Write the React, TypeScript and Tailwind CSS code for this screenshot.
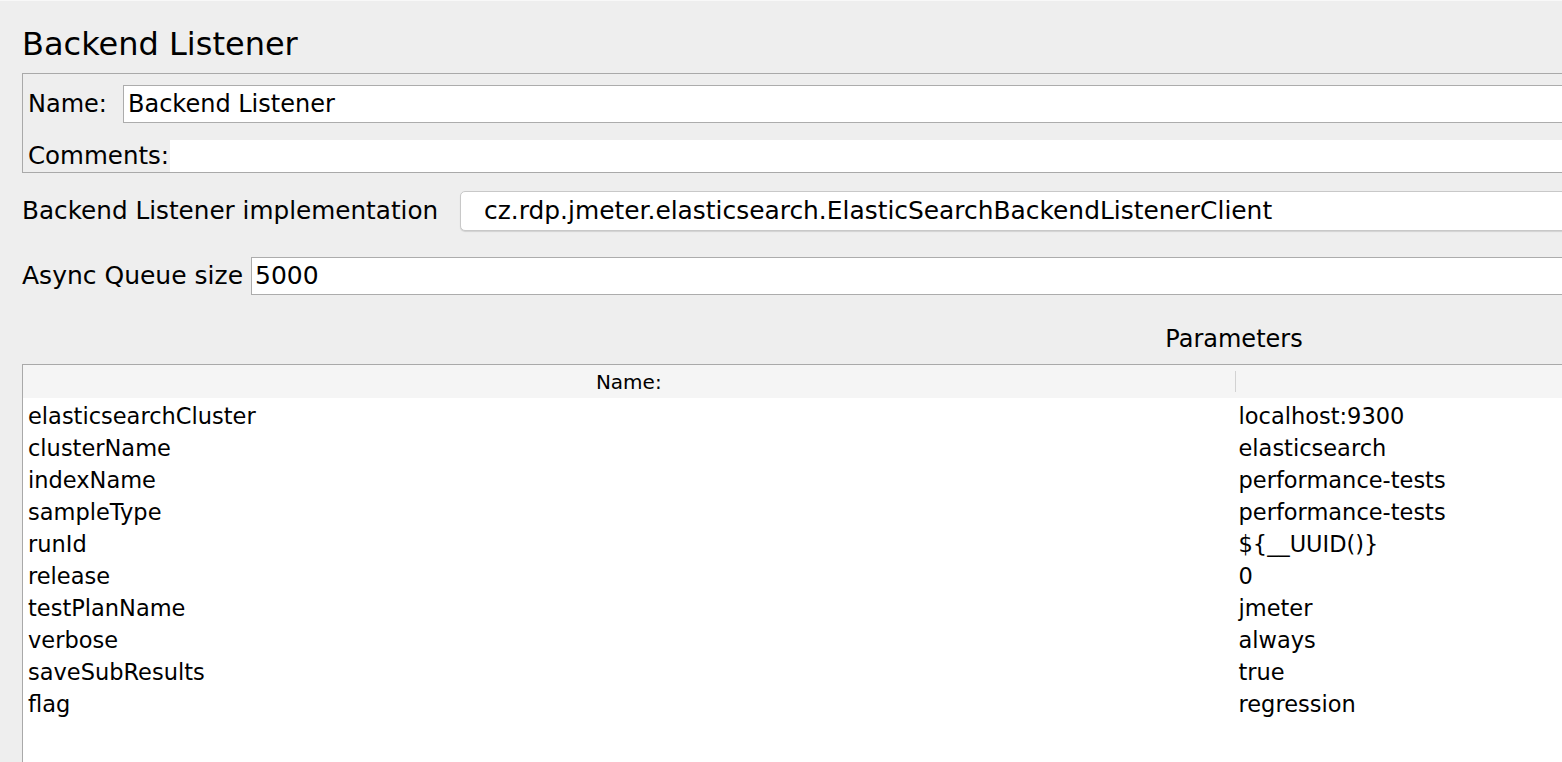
import React from "react";

const params: [string, string][] = [
  ["elasticsearchCluster", "localhost:9300"],
  ["clusterName", "elasticsearch"],
  ["indexName", "performance-tests"],
  ["sampleType", "performance-tests"],
  ["runId", "${__UUID()}"],
  ["release", "0"],
  ["testPlanName", "jmeter"],
  ["verbose", "always"],
  ["saveSubResults", "true"],
  ["flag", "regression"],
];

export default function App() {
  return (
    <div
      className="w-[1562px] h-[762px] overflow-hidden bg-[#eeeeee] text-black"
      style={{ fontFamily: '"DejaVu Sans", "Open Sans", sans-serif' }}
    >
      <div className="w-[2446px] pl-[22px] border-t border-[#f8f8f8]">
        {/* title */}
        <div className="h-[72px] pt-[23px]">
          <div className="text-[32px] leading-[40px]">Backend Listener</div>
        </div>

        {/* name / comments panel */}
        <div className="border-t border-b border-l border-[#a9a9a9] pt-[11px] pl-[5px]">
          <div className="flex h-[38px] items-center">
            <div className="w-[95px] text-[24px]">Name:</div>
            <div className="flex-1 h-full bg-white border border-[#acacac] flex items-center pl-[4px] text-[24px]">
              Backend Listener
            </div>
          </div>
          <div className="flex h-[32px] items-center mt-[17px]">
            <div className="w-[142px] text-[24.5px]">Comments:</div>
            <div className="flex-1 h-full bg-white" />
          </div>
        </div>

        {/* implementation combo */}
        <div className="flex items-center h-[40px] mt-[18px]">
          <div className="w-[438px] text-[24.7px]">Backend Listener implementation</div>
          <div className="flex-1 h-full bg-white border border-[#c8c8c8] rounded-[5px] shadow-[0_1px_1px_rgba(0,0,0,0.12)] flex items-center pl-[23px] text-[24.9px]">
            cz.rdp.jmeter.elasticsearch.ElasticSearchBackendListenerClient
          </div>
        </div>

        {/* async queue */}
        <div className="flex items-center h-[38px] mt-[26px]">
          <div className="w-[229px] text-[25px]">Async Queue size</div>
          <div className="flex-1 h-full bg-white border border-[#acacac] flex items-center pl-[3px] text-[25px]">
            5000
          </div>
        </div>

        {/* parameters title */}
        <div className="h-[69px] pt-[32px] text-center">
          <div className="text-[24px] leading-[24px]">Parameters</div>
        </div>

        {/* table */}
        <div className="border-t border-l border-[#a9a9a9] bg-white h-[400px]">
          <div className="grid grid-cols-2 h-[33px] bg-[#f5f5f5] text-[20px]">
            <div className="flex items-center justify-center">Name:</div>
            <div className="flex items-center">
              <div className="w-px h-[21px] bg-[#d2d2d2]" />
            </div>
          </div>
          <div className="pt-[2px]">
            {params.map(([k, v]) => (
              <div key={k} className="grid grid-cols-2 h-[32px] items-center text-[22.5px]">
                <div className="pl-[5px]">{k}</div>
                <div className="pl-[4px]">{v}</div>
              </div>
            ))}
          </div>
        </div>
      </div>
    </div>
  );
}
